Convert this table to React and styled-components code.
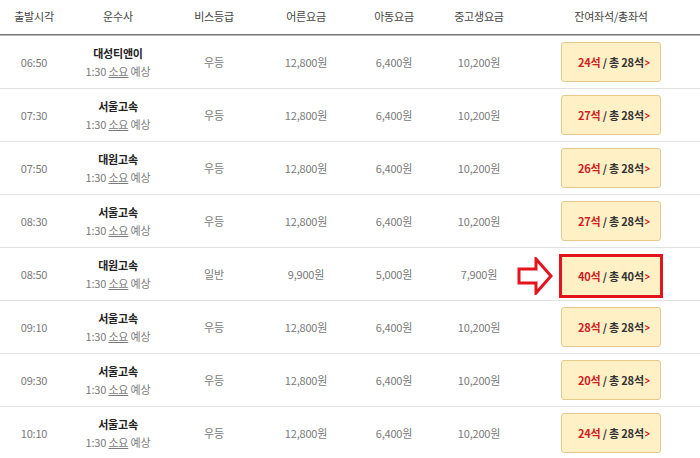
import styled, { createGlobalStyle } from "styled-components";

const GlobalStyle = createGlobalStyle`
  html, body {
    margin: 0;
    padding: 0;
    background: #fff;
  }
  body {
    font-family: "Noto Sans CJK KR", "Noto Sans", sans-serif;
  }
`;

const rows = [
  { time: "06:50", company: "대성티앤이", grade: "우등", adult: "12,800원", child: "6,400원", teen: "10,200원", left: 24, total: 28 },
  { time: "07:30", company: "서울고속", grade: "우등", adult: "12,800원", child: "6,400원", teen: "10,200원", left: 27, total: 28 },
  { time: "07:50", company: "대원고속", grade: "우등", adult: "12,800원", child: "6,400원", teen: "10,200원", left: 26, total: 28 },
  { time: "08:30", company: "서울고속", grade: "우등", adult: "12,800원", child: "6,400원", teen: "10,200원", left: 27, total: 28 },
  { time: "08:50", company: "대원고속", grade: "일반", adult: "9,900원", child: "5,000원", teen: "7,900원", left: 40, total: 40, picked: true },
  { time: "09:10", company: "서울고속", grade: "우등", adult: "12,800원", child: "6,400원", teen: "10,200원", left: 28, total: 28 },
  { time: "09:30", company: "서울고속", grade: "우등", adult: "12,800원", child: "6,400원", teen: "10,200원", left: 20, total: 28 },
  { time: "10:10", company: "서울고속", grade: "우등", adult: "12,800원", child: "6,400원", teen: "10,200원", left: 24, total: 28 },
];

export default () => {
  return (
    <>
      <GlobalStyle />
      <Table>
        <Head>
          <Th>출발시각</Th>
          <Th>운수사</Th>
          <Th>비스등급</Th>
          <Th>어른요금</Th>
          <Th>아동요금</Th>
          <Th>중고생요금</Th>
          <Th>잔여좌석/총좌석</Th>
        </Head>
        {rows.map((r, i) => (
          <Row key={i}>
            <Td>{r.time}</Td>
            <Td>
              <Company>
                <strong>{r.company}</strong>
                <span>
                  1:30 <u>소요</u> 예상
                </span>
              </Company>
            </Td>
            <Td>{r.grade}</Td>
            <Td>{r.adult}</Td>
            <Td>{r.child}</Td>
            <Td>{r.teen}</Td>
            <SeatCell>
              {r.picked && (
                <Pointer width="36" height="38" viewBox="0 0 36 38">
                  <polygon
                    points="2,12 19,12 19,2 34,19 19,36 19,26 2,26"
                    fill="#fff"
                    stroke="#e3141d"
                    strokeWidth="3"
                    strokeLinejoin="miter"
                  />
                </Pointer>
              )}
              <SeatButton $picked={r.picked}>
                <em>{r.left}석</em>&nbsp;/ 총 {r.total}석
                <Chevron>&gt;</Chevron>
              </SeatButton>
            </SeatCell>
          </Row>
        ))}
      </Table>
    </>
  );
};

const Table = styled.div`
  width: 700px;
`;

const cols = "68px 100px 92px 92px 84px 86px 1fr";

const Head = styled.div`
  display: grid;
  grid-template-columns: ${cols};
  height: 34px;
  align-items: center;
  border-bottom: 1px solid #7a7a7a;
  box-shadow: 0 1px 0 #b5b5b5;
  margin-bottom: 1px;
`;

const Th = styled.div`
  text-align: center;
  font-size: 11px;
  color: #444;
  letter-spacing: -0.2px;
  padding-bottom: 2px;
`;

const Row = styled.div`
  display: grid;
  grid-template-columns: ${cols};
  height: 52px;
  align-items: center;
  border-bottom: 1px solid #e2e2e2;
`;

const Td = styled.div`
  text-align: center;
  font-size: 11px;
  color: #7a7a7a;
  letter-spacing: -0.2px;
`;

const Company = styled.div`
  display: flex;
  flex-direction: column;
  align-items: center;
  gap: 2px;
  strong {
    font-size: 11px;
    font-weight: bold;
    color: #222;
  }
  span {
    font-size: 11px;
    color: #7a7a7a;
  }
  u {
    text-decoration: underline;
  }
`;

const SeatCell = styled.div`
  position: relative;
  display: flex;
  justify-content: center;
  align-items: center;
`;

const Pointer = styled.svg`
  position: absolute;
  left: -5px;
  top: 50%;
  margin-top: 2px;
  transform: translateY(-50%);
`;

const SeatButton = styled.div`
  box-sizing: border-box;
  display: flex;
  align-items: center;
  justify-content: center;
  width: ${(p) => (p.$picked ? "104px" : "100px")};
  height: ${(p) => (p.$picked ? "44px" : "40px")};
  margin-top: ${(p) => (p.$picked ? "3px" : "0")};
  background: #fff0c6;
  border: ${(p) => (p.$picked ? "3px solid #e3141d" : "1px solid #e8c98d")};
  border-radius: ${(p) => (p.$picked ? "0" : "3px")};
  font-size: 11px;
  font-weight: bold;
  color: #333;
  padding-left: 6px;
  letter-spacing: -0.2px;
  em {
    font-style: normal;
    color: #d0201e;
  }
`;

const Chevron = styled.span`
  color: #d0201e;
  margin-left: 0;
  font-size: 11px;
  font-weight: bold;
  transform: scaleX(0.8);
`;
